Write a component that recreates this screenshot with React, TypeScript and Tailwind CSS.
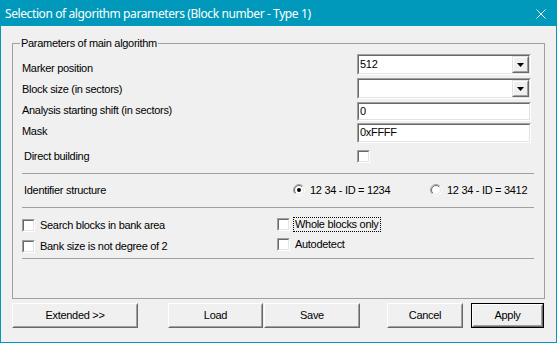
import type { ReactNode } from "react";

function Sunken({ className = "", children }: { className?: string; children?: ReactNode }) {
  return (
    <div className={`border border-t-[#a0a0a0] border-l-[#a0a0a0] border-b-white border-r-white ${className}`}>
      <div className="h-full w-full border border-t-[#696969] border-l-[#696969] border-b-[#e3e3e3] border-r-[#e3e3e3] bg-white">
        {children}
      </div>
    </div>
  );
}

function Combo({ value }: { value: string }) {
  return (
    <Sunken className="h-[21px] w-[174px]">
      <div className="flex h-full items-stretch">
        <span className="flex-1 pl-[1px] leading-[17px]">{value}</span>
        <div className="w-[17px] border border-t-[#e3e3e3] border-l-[#e3e3e3] border-b-[#696969] border-r-[#696969]">
          <div className="flex h-full items-center justify-center border border-t-white border-l-white border-b-[#a0a0a0] border-r-[#a0a0a0] bg-[#f0f0f0]">
            <svg width="7" height="4" viewBox="0 0 7 4">
              <path d="M0 0h7L3.5 4z" fill="#000" />
            </svg>
          </div>
        </div>
      </div>
    </Sunken>
  );
}

function Field({ value, h }: { value: string; h: string }) {
  return (
    <Sunken className={`${h} w-[174px]`}>
      <span className="block pl-[1px] leading-[15px]">{value}</span>
    </Sunken>
  );
}

function Check() {
  return <Sunken className="h-[13px] w-[13px] shrink-0" />;
}

function Radio({ checked }: { checked?: boolean }) {
  return (
    <svg width="12" height="12" viewBox="0 0 12 12" className="shrink-0">
      <defs>
        <linearGradient id="ro" x1="0" y1="0" x2="1" y2="1">
          <stop offset="0.45" stopColor="#a0a0a0" />
          <stop offset="0.55" stopColor="#ffffff" />
        </linearGradient>
        <linearGradient id="ri" x1="0" y1="0" x2="1" y2="1">
          <stop offset="0.45" stopColor="#696969" />
          <stop offset="0.55" stopColor="#e3e3e3" />
        </linearGradient>
      </defs>
      <circle cx="6" cy="6" r="5.5" fill="none" stroke="url(#ro)" />
      <circle cx="6" cy="6" r="4.5" fill="#fff" stroke="url(#ri)" />
      {checked && <circle cx="6" cy="6" r="2" fill="#000" />}
    </svg>
  );
}

function Button({ label, w, def }: { label: string; w: string; def?: boolean }) {
  const inner = (
    <div className="h-full border border-t-white border-l-white border-b-[#696969] border-r-[#696969]">
      <div className="flex h-full items-center justify-center border border-t-[#f0f0f0] border-l-[#f0f0f0] border-b-[#a0a0a0] border-r-[#a0a0a0] bg-[#f0f0f0]">
        {label}
      </div>
    </div>
  );
  return (
    <div className={`h-[25px] ${w} ${def ? "border border-black" : ""}`}>{inner}</div>
  );
}

export default function App() {
  return (
    <div className="flex h-[343px] w-[557px] flex-col border border-[#0099bc] bg-[#f0f0f0] font-['Liberation_Sans',Arial,sans-serif] text-[11px] leading-[13px] tracking-[-0.3px] text-black">
      {/* Title bar */}
      <div className="flex h-[25px] shrink-0 items-center justify-between bg-[#0099bc] pl-[4px] pr-[10px] text-white">
        <span className="font-['Noto_Sans',sans-serif] text-[12px] leading-[16px] tracking-[-0.4px]">
          Selection of algorithm parameters (Block number - Type 1)
        </span>
        <svg width="10" height="10" viewBox="0 0 10 10">
          <path d="M0.5 0.5l9 9M9.5 0.5l-9 9" stroke="#fff" strokeWidth="1" />
        </svg>
      </div>

      <div className="flex flex-1 flex-col px-[11px]">
        <fieldset className="mt-[11px] h-[262px] border border-[#a0a0a0] pl-[9px] pr-[10px]">
          <legend className="ml-[-2px] px-[1px]">Parameters of main algorithm</legend>

          <div className="mt-[4px] flex h-[21px]">
            <span className="w-[335px] pt-[8px]">Marker position</span>
            <Combo value="512" />
          </div>
          <div className="mt-[3px] flex h-[21px]">
            <span className="w-[335px] pt-[5px]">Block size (in sectors)</span>
            <Combo value="" />
          </div>
          <div className="mt-[3px] flex h-[19px]">
            <span className="w-[335px] pt-[2px]">Analysis starting shift (in sectors)</span>
            <Field value="0" h="h-[19px]" />
          </div>
          <div className="mt-[2px] flex h-[20px]">
            <span className="w-[335px] pt-[2px]">Mask</span>
            <Field value="0xFFFF" h="h-[20px]" />
          </div>
          <div className="mt-[6px] flex h-[14px]">
            <span className="w-[335px] pl-[2px] pt-[1px]">Direct building</span>
            <div className="pt-[1px]">
              <Check />
            </div>
          </div>

          <div className="mt-[10px] h-px bg-[#a0a0a0]" />

          <div className="mt-[9px] flex h-[14px] items-center">
            <span className="w-[271px] pl-[2px]">Identifier structure</span>
            <div className="flex w-[137px] items-center gap-[5px]">
              <Radio checked />
              <span>12 34 - ID = 1234</span>
            </div>
            <div className="flex items-center gap-[5px]">
              <Radio />
              <span>12 34 - ID = 3412</span>
            </div>
          </div>

          <div className="mt-[10px] h-px bg-[#a0a0a0]" />

          <div className="mt-[10px] flex">
            <div className="flex w-[255px] flex-col gap-[8px] pt-[1px]">
              <div className="flex items-center gap-[5px]">
                <Check />
                <span>Search blocks in bank area</span>
              </div>
              <div className="flex items-center gap-[5px]">
                <Check />
                <span>Bank size is not degree of 2</span>
              </div>
            </div>
            <div className="flex flex-col gap-[7px]">
              <div className="flex items-center gap-[4px]">
                <Check />
                <span className="px-[1px] outline outline-1 outline-dotted outline-black">Whole blocks only</span>
              </div>
              <div className="flex items-center gap-[5px]">
                <Check />
                <span>Autodetect</span>
              </div>
            </div>
          </div>

          <div className="mt-[5px] h-px bg-[#a0a0a0]" />
        </fieldset>

        <div className="mt-[4px] flex">
          <Button label="Extended >>" w="w-[126px]" />
          <div className="ml-[30px]">
            <Button label="Load" w="w-[95px]" />
          </div>
          <div className="ml-[1px]">
            <Button label="Save" w="w-[96px]" />
          </div>
          <div className="ml-[27px]">
            <Button label="Cancel" w="w-[76px]" />
          </div>
          <div className="ml-[8px]">
            <Button label="Apply" w="w-[73px]" def />
          </div>
        </div>
      </div>
    </div>
  );
}
